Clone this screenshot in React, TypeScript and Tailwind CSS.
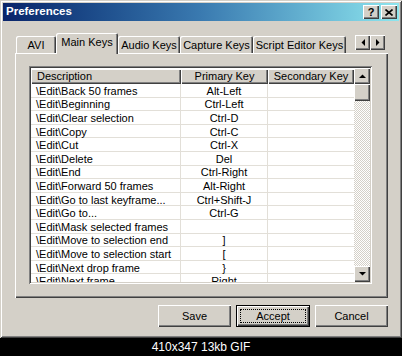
const rows: [string, string][] = [
  ["\\Edit\\Back 50 frames", "Alt-Left"],
  ["\\Edit\\Beginning", "Ctrl-Left"],
  ["\\Edit\\Clear selection", "Ctrl-D"],
  ["\\Edit\\Copy", "Ctrl-C"],
  ["\\Edit\\Cut", "Ctrl-X"],
  ["\\Edit\\Delete", "Del"],
  ["\\Edit\\End", "Ctrl-Right"],
  ["\\Edit\\Forward 50 frames", "Alt-Right"],
  ["\\Edit\\Go to last keyframe...", "Ctrl+Shift-J"],
  ["\\Edit\\Go to...", "Ctrl-G"],
  ["\\Edit\\Mask selected frames", ""],
  ["\\Edit\\Move to selection end", "]"],
  ["\\Edit\\Move to selection start", "["],
  ["\\Edit\\Next drop frame", "}"],
  ["\\Edit\\Next frame", "Right"],
];

const raised =
  "bg-[#d4d0c8] shadow-[inset_1px_1px_#ffffff,inset_-1px_-1px_#404040,inset_-2px_-2px_#808080]";

function Arrow({ dir }: { dir: "up" | "down" | "left" | "right" }) {
  const pts = {
    up: "0,4 7,4 3.5,0.5",
    down: "0,0 7,0 3.5,3.5",
    left: "4,0 4,7 0.5,3.5",
    right: "0,0 0,7 3.5,3.5",
  }[dir];
  const vertical = dir === "up" || dir === "down";
  return (
    <svg width={vertical ? 7 : 4} height={vertical ? 4 : 7} viewBox={vertical ? "0 0 7 4" : "0 0 4 7"}>
      <polygon points={pts} fill="#000" />
    </svg>
  );
}

function Tab({ label, width, active }: { label: string; width: string; active?: boolean }) {
  return (
    <div
      className={`${width} ${
        active ? "h-[21px] relative top-px z-10 pb-[3px]" : "h-[17px] pt-[1px]"
      } flex items-center justify-center bg-[#d4d0c8] rounded-t-[2px] shadow-[inset_1px_1px_#ffffff,inset_-1px_0_#404040,inset_-2px_0_#808080]`}
    >
      {label}
    </div>
  );
}

export default function App() {
  return (
    <div className="w-[402px] h-[356px] bg-black flex flex-col font-['Liberation_Sans',Arial,sans-serif] text-[11px] text-black">
      {/* Window */}
      <div className="h-[340px] bg-[#d4d0c8] p-[3px] flex flex-col shadow-[inset_1px_1px_#d4d0c8,inset_-1px_-1px_#404040,inset_2px_2px_#ffffff,inset_-2px_-2px_#808080]">
        {/* Title bar */}
        <div className="h-[18px] flex items-center pl-[3px] pr-[2px] bg-gradient-to-r from-[#0a246a] via-[#3a7ab0] to-[#8ee6ee]">
          <span className="font-bold text-white text-[11.5px]">Preferences</span>
          <div className="ml-auto flex gap-[2px]">
            <div className={`${raised} w-[16px] h-[14px] flex items-center justify-center font-bold text-[11px] leading-none`}>
              ?
            </div>
            <div className={`${raised} w-[16px] h-[14px] flex items-center justify-center`}>
              <svg width="8" height="7" viewBox="0 0 8 7">
                <path d="M0.5 0.5 L7.5 6.5 M7.5 0.5 L0.5 6.5" stroke="#000" strokeWidth="1.6" />
              </svg>
            </div>
          </div>
        </div>

        {/* Tabs */}
        <div className="mt-[12px] h-[20px] flex items-end pl-[13px]">
          <Tab label="AVI" width="w-[40px]" />
          <Tab label="Main Keys" width="w-[62px]" active />
          <Tab label="Audio Keys" width="w-[62px]" />
          <Tab label="Capture Keys" width="w-[73px]" />
          <Tab label="Script Editor Keys" width="w-[93px]" />
          <div className="ml-auto mr-[14px] mb-[3px] flex">
            <div className={`${raised} w-[15px] h-[15px] flex items-center justify-center`}>
              <Arrow dir="left" />
            </div>
            <div className={`${raised} w-[15px] h-[15px] flex items-center justify-center`}>
              <Arrow dir="right" />
            </div>
          </div>
        </div>

        {/* Tab panel */}
        <div className="ml-[12px] w-[373px] h-[245px] bg-[#d4d0c8] pt-[13px] pl-[14px] shadow-[inset_1px_1px_#ffffff,inset_-1px_-1px_#404040,inset_-2px_-2px_#808080]">
          {/* List view */}
          <div className="w-[343px] h-[218px] bg-white p-[2px] flex shadow-[inset_1px_1px_#808080,inset_-1px_-1px_#ffffff,inset_2px_2px_#404040,inset_-2px_-2px_#d4d0c8]">
            <div className="w-[323px] flex flex-col overflow-hidden">
              <div className="h-[16px] flex shrink-0 pt-px">
                <div className={`${raised} w-[150px] flex items-center pl-[6px]`}>Description</div>
                <div className={`${raised} w-[87px] flex items-center justify-center`}>Primary Key</div>
                <div className={`${raised} w-[86px] flex items-center justify-center`}>Secondary Key</div>
              </div>
              {rows.map(([desc, key]) => (
                <div key={desc} className="h-[13.6px] shrink-0 flex border-b border-[#e2dfd8] leading-none">
                  <div className="w-[150px] flex items-center pl-[5px] pt-[2px] border-r border-[#e2dfd8] whitespace-nowrap">{desc}</div>
                  <div className="w-[87px] flex items-center justify-center pt-[2px] border-r border-[#e2dfd8]">{key}</div>
                  <div className="w-[86px]" />
                </div>
              ))}
            </div>
            {/* Scrollbar */}
            <div className="w-[16px] flex flex-col">
              <div className={`${raised} h-[16px] flex items-center justify-center`}>
                <Arrow dir="up" />
              </div>
              <div className={`${raised} h-[17px]`} />
              <div className="flex-1 bg-[repeating-conic-gradient(#d4d0c8_0%_25%,#ffffff_0%_50%)] bg-[length:2px_2px]" />
              <div className={`${raised} h-[16px] flex items-center justify-center`}>
                <Arrow dir="down" />
              </div>
            </div>
          </div>
        </div>

        {/* Buttons */}
        <div className="mt-[7px] flex justify-end gap-[5px] pr-[11px]">
          <div className={`${raised} w-[73px] h-[22px] flex items-center justify-center`}>Save</div>
          <div className="w-[74px] h-[22px] border border-black">
            <div className={`${raised} w-full h-full p-[3px]`}>
              <div className="w-full h-full border border-dotted border-black flex items-center justify-center">
                Accept
              </div>
            </div>
          </div>
          <div className={`${raised} w-[73px] h-[22px] flex items-center justify-center`}>Cancel</div>
        </div>
      </div>

      {/* Caption */}
      <div className="flex-1 flex items-center justify-center text-white text-[12px]">410x347 13kb GIF</div>
    </div>
  );
}
